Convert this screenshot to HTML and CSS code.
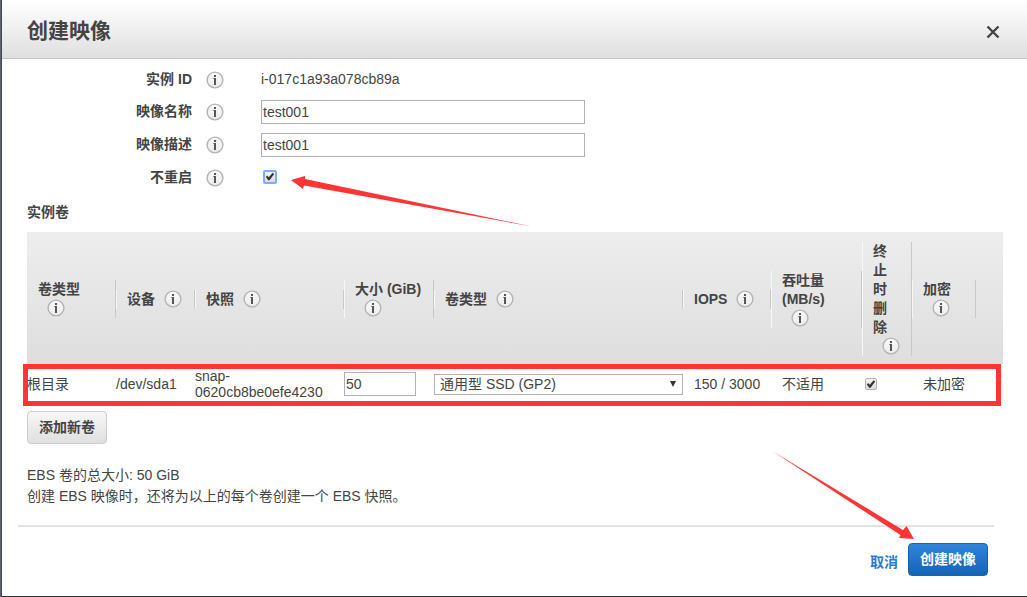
FILE: index.html
```html
<!DOCTYPE html>
<html lang="zh-CN">
<head>
<meta charset="utf-8">
<title>创建映像</title>
<link rel="stylesheet" href="styles.css">
</head>
<body>
<svg class="defs" aria-hidden="true">
  <defs>
    <linearGradient id="infoFill" x1="0" y1="0" x2="0" y2="1">
      <stop offset="0" stop-color="#f8f8f8"/>
      <stop offset="1" stop-color="#ececec"/>
    </linearGradient>
    <symbol id="info" viewBox="0 0 18 18">
      <circle cx="9" cy="9" r="7.9" fill="url(#infoFill)" stroke="#b4b4b4" stroke-width="1.4"/>
      <rect x="8" y="4" width="2" height="2" fill="#555"/>
      <path d="M7.400 7H10v7H8V8h-.6z" fill="#555"/>
    </symbol>
  </defs>
</svg>
<main class="dialog">
  <header class="dialog-header">
    <h1 class="dialog-title">创建映像</h1>
    <button class="close" type="button" aria-label="关闭">
      <svg width="14" height="14" viewBox="0 0 14 14"><path d="M1.500 1.500l11 11M12.500 1.500l-11 11" stroke="#444" stroke-width="2.400"/></svg>
    </button>
  </header>
  <form class="content">
    <div class="field">
      <span class="label">实例 ID</span>
      <svg class="info"><use href="#info"/></svg>
      <span>i-017c1a93a078cb89a</span>
    </div>
    <div class="field">
      <label class="label" for="name">映像名称</label>
      <svg class="info"><use href="#info"/></svg>
      <input class="text" id="name" type="text" value="test001">
    </div>
    <div class="field">
      <label class="label" for="desc">映像描述</label>
      <svg class="info"><use href="#info"/></svg>
      <input class="text" id="desc" type="text" value="test001">
    </div>
    <div class="field">
      <label class="label" for="noreboot">不重启</label>
      <svg class="info"><use href="#info"/></svg>
      <div class="check-cell">
        <input class="check check-focus" id="noreboot" type="checkbox" checked>
        <svg class="arrow-check" width="244" height="54" viewBox="0 0 244 54"><path d="M1 8L15 4L15 7L242 54.500L14 13.500L13 17z" fill="#ff3535"/></svg>
      </div>
    </div>

    <section class="volumes">
      <h2 class="section-title">实例卷</h2>
      <div class="table-wrap">
        <table class="table">
          <colgroup>
            <col class="c-type"><col class="c-device"><col class="c-snap"><col class="c-size"><col><col class="c-iops"><col class="c-rate"><col class="c-del"><col class="c-enc">
          </colgroup>
          <thead>
            <tr>
              <th><div class="head">卷类型<br><svg class="info"><use href="#info"/></svg></div></th>
              <th><div class="head">设备<svg class="info"><use href="#info"/></svg></div></th>
              <th><div class="head">快照<svg class="info"><use href="#info"/></svg></div></th>
              <th><div class="head">大小 (GiB)<br><svg class="info"><use href="#info"/></svg></div></th>
              <th><div class="head">卷类型<svg class="info"><use href="#info"/></svg></div></th>
              <th><div class="head">IOPS<svg class="info"><use href="#info"/></svg></div></th>
              <th><div class="head">吞吐量<br>(MB/s)<br><svg class="info"><use href="#info"/></svg></div></th>
              <th><div class="head"><span class="stacked">终止时删除</span><svg class="info"><use href="#info"/></svg></div></th>
              <th class="last"><div class="head">加密<br><svg class="info"><use href="#info"/></svg></div></th>
            </tr>
          </thead>
          <tbody>
            <tr>
              <td>根目录</td>
              <td>/dev/sda1</td>
              <td class="snap">snap-<br>0620cb8be0efe4230</td>
              <td><input class="text size" type="text" value="50" aria-label="大小 (GiB)"></td>
              <td>
                <div class="select-wrap">
                  <select class="select" aria-label="卷类型"><option>通用型 SSD (GP2)</option></select>
                  <svg class="caret" width="6" height="6" viewBox="0 0 6 6"><path d="M0 0h6L3 6z" fill="#333"/></svg>
                </div>
              </td>
              <td class="inset">150 / 3000</td>
              <td class="inset">不适用</td>
              <td><input class="check check-row" type="checkbox" checked aria-label="终止时删除"></td>
              <td class="inset">未加密</td>
            </tr>
          </tbody>
        </table>
        <div class="highlight"></div>
      </div>
      <button class="btn" type="button">添加新卷</button>
      <p class="note">EBS 卷的总大小: 50 GiB<br>创建 EBS 映像时，还将为以上的每个卷创建一个 EBS 快照。</p>
    </section>
  </form>
  <footer class="footer">
    <a class="cancel" href="#">取消</a>
    <div class="submit-wrap">
      <button class="btn btn-primary" type="button">创建映像</button>
      <svg class="arrow-submit" width="144" height="92" viewBox="0 0 144 92"><path d="M1 1.500L131 80L134.500 76L142 89L127 88L128.500 85z" fill="#ff3535"/></svg>
    </div>
  </footer>
</main>
</body>
</html>
```
FILE: styles.css
```css
* { box-sizing: border-box; }

body {
  margin: 0;
  min-height: 100vh;
  display: flex;
  padding: 0 0 1px 2px;
  background: linear-gradient(to right, #5d6373 1px, #2b2d33 2px);
  color: #444;
  font: 14px/19px "Liberation Sans", "Noto Sans CJK SC", sans-serif;
}

.defs { position: absolute; width: 0; height: 0; }

.dialog { flex: 1; min-width: 0; background: #fff; }

.dialog-header {
  display: flex;
  align-items: center;
  justify-content: space-between;
  height: 59px;
  padding: 4px 27px 0 25px;
  border-bottom: 1px solid #c4c4c4;
  background: linear-gradient(#fff, #dfdfdf);
}

.dialog-title { margin: 0; font-size: 21px; line-height: 28px; }

.close { display: flex; padding: 0; border: 0; margin-top: 2px; background: none; }

.content { padding-top: 5px; }

.field {
  display: grid;
  grid-template-columns: 190px 18px 324px;
  column-gap: 14px;
  align-items: center;
  height: 33px;
}
.field:first-child { height: 31px; }
.field > :last-child { margin-left: 23px; }

.label { text-align: right; font-weight: bold; }

.info { width: 18px; height: 18px; }

.text {
  width: 324px;
  height: 24px;
  padding: 0 1px;
  border: 1px solid #b0b0b0;
  background: #fff;
  color: #444;
  font: inherit;
}
.size { display: block; width: 72px; }

.check-cell { position: relative; display: flex; padding: 0 0 2px 2px; }

.check {
  appearance: none;
  width: 12px;
  height: 12px;
  margin: 0;
  border: 1px solid #b4b4b4;
  border-radius: 2px;
  background: linear-gradient(#f2f2f2, #dcdcdc);
}
.check::before {
  content: "";
  display: block;
  height: 100%;
  background: #333;
  clip-path: polygon(8% 52%, 24% 42%, 38% 58%, 76% 12%, 92% 24%, 46% 88%, 32% 88%);
}
.check-focus { width: 14px; height: 14px; border: 2px solid #7fadf3; }
.check-row { display: block; margin-left: 3px; }

.arrow-check { position: absolute; left: 29px; top: 2px; }

.volumes { padding: 8px 24px 0 25px; }

.section-title { margin: 0 0 10px; font-size: 14px; line-height: 20px; }

.table-wrap { position: relative; }

.table { width: 100%; table-layout: fixed; border-collapse: collapse; }
.c-type { width: 89px; }
.c-device { width: 79px; }
.c-snap { width: 149px; }
.c-size { width: 90px; }
.c-iops { width: 88px; }
.c-rate { width: 91px; }
.c-del { width: 50px; }
.c-enc { width: 91px; }

.table thead { background: linear-gradient(#ededed, #dedede); }
.table th { padding: 10px 0 8px; text-align: left; }
.table th.last { padding-right: 27px; }
.head {
  padding-left: 10px;
  border-right: 1px solid #c8c8c8;
  border-left: 1px solid #f7f7f7;
  white-space: nowrap;
}
.table th:first-child .head { border-left-color: transparent; }
.head .info { margin-left: 9px; vertical-align: -4px; }
.stacked { display: block; width: 14px; white-space: normal; }

.table td { height: 40px; padding: 0; }
.table td.snap { line-height: 16px; }
.table td.inset { padding-left: 11px; }

.select-wrap { position: relative; }
.select {
  appearance: none;
  display: block;
  width: 100%;
  height: 21px;
  padding: 0 20px 0 5px;
  border: 1px solid #b0b0b0;
  border-radius: 0;
  background: #fff;
  color: #444;
  font: inherit;
}
.caret { position: absolute; right: 7px; top: 7px; }

.highlight {
  position: absolute;
  left: -4px;
  right: 2px;
  bottom: -2px;
  height: 42px;
  border: 5px solid #ff3535;
}

.btn {
  height: 33px;
  padding: 0 11px;
  border: 1px solid #ccc;
  border-radius: 4px;
  background: linear-gradient(#f7f7f7, #dfdfdf);
  color: #444;
  font: inherit;
  font-weight: bold;
}
.volumes .btn { display: block; margin-top: 7px; }

.note { margin: 21px 0 0; line-height: 21px; }

.footer {
  display: flex;
  justify-content: flex-end;
  align-items: center;
  gap: 10px;
  margin: 18px 33px 0 16px;
  padding: 16px 6px 20px 0;
  border-top: 2px solid #e2e2e2;
}

.cancel { padding-top: 6px; color: #2a7bd3; font-weight: bold; text-decoration: none; }

.submit-wrap { position: relative; }
.btn-primary {
  display: block;
  border-color: #1a62ae;
  background: linear-gradient(#2f85dc, #1463b6);
  color: #fff;
}
.arrow-submit { position: absolute; right: 72px; bottom: 34px; }
```
